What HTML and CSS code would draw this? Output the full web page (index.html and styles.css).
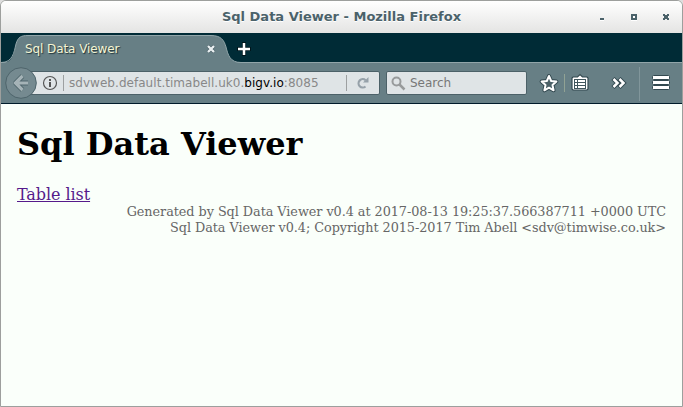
FILE: index.html
```html
<!DOCTYPE html>
<html lang="en">
<head>
<meta charset="utf-8">
<title>Sql Data Viewer</title>
<link rel="stylesheet" href="styles.css">
</head>
<body>
<div class="window">
  <header class="titlebar">
    <span class="window-title">Sql Data Viewer - Mozilla Firefox</span>
    <svg class="window-controls" width="80" height="32" shape-rendering="crispEdges">
      <g fill="#4b626a"><path d="M9 17h4v2H9zM40 13h6v6h-6zM72 13h2v1h2v-1h2v2h-1v2h1v2h-2v-1h-2v1h-2v-2h1v-2h-1z"/></g>
      <path fill="#fff" d="M42 15h2v2h-2zM9 19h4v1H9zM40 19h6v1h-6z"/>
    </svg>
  </header>
  <div class="tabs">
    <div class="tab">
      <svg class="tab-shape" width="241" height="31">
        <path d="M0 30C13 30 13 19 15 11C17 4 20 2.500 27 2.500H210C220 2.500 223 7 225 14C227 22 229 29.500 240 29.500V31H0Z" fill="#677f85"/>
        <path d="M0 29.500C12 29.500 13 19 15 11C17 4 20 2.500 27 2.500H210C220 2.500 223 7 225 14C227 22 229 29.500 240 29.500" fill="none" stroke="#91a5a9"/>
      </svg>
      <span class="tab-label">Sql Data Viewer</span>
      <svg class="tab-close" width="10" height="10"><path d="M2 2l6 6M8 2l-6 6" stroke="#4b6067" stroke-width="3.600"/><path d="M2 2l6 6M8 2l-6 6" stroke="#e9eff1" stroke-width="2.400"/></svg>
    </div>
    <svg class="new-tab" width="16" height="16"><path d="M8 1v14M1 8h14" stroke="#000" stroke-opacity=".5" stroke-width="4"/><path d="M8 2v12M2 8h12" stroke="#fff" stroke-width="2.500"/></svg>
  </div>
  <nav class="toolbar">
    <svg class="back" width="32" height="32"><circle cx="16" cy="16" r="15.300" fill="#758a90" stroke="#4e646b"/><path d="M17.500 9L10.500 16l7 7M11.500 16H23" fill="none" stroke="#4f656c" stroke-width="5" stroke-linejoin="round"/><path d="M17.500 9L10.500 16l7 7M11.500 16H23" fill="none" stroke="#a5b3b7" stroke-width="3.200"/></svg>
    <div class="address">
      <svg class="info" width="16" height="16"><circle cx="8" cy="8" r="6.500" fill="none" stroke="#555" stroke-width="1.200"/><path d="M7 4h2v2H7zM7 7h2v5H7z" fill="#555"/></svg>
      <span class="divider"></span>
      <span class="url">sdvweb.default.timabell.uk0.<b>bigv.io</b>:8085</span>
      <span class="divider reload-divider"></span>
      <svg class="reload" width="12" height="12"><path d="M8.500 9.500A4.200 4.200 0 1 1 8.600 3.200" fill="none" stroke="#96a1a9" stroke-width="2.200"/><path d="M11.500 0v5.500H6z" fill="#96a1a9"/></svg>
    </div>
    <div class="search">
      <svg width="15" height="15"><circle cx="5.500" cy="5.500" r="4" fill="none" stroke="#989b9c" stroke-width="2"/><path d="M8.500 8.500L13.500 13.500" stroke="#989b9c" stroke-width="2.500"/></svg>
      <span>Search</span>
    </div>
    <svg class="actions" width="154" height="39">
      <path d="M21 12l2.200 5 5.200.6-3.900 3.500 1.100 5.200L21 23.700l-4.600 2.600 1.100-5.200-3.900-3.500 5.200-.6z" fill="none" stroke="#334950" stroke-width="4" stroke-linejoin="round"/>
      <path d="M21 12l2.200 5 5.200.6-3.900 3.500 1.100 5.200L21 23.700l-4.600 2.600 1.100-5.200-3.900-3.500 5.200-.6z" fill="#4b6067" stroke="#fff" stroke-width="2" stroke-linejoin="round"/>
      <path d="M36.500 10v18" stroke="#91a294"/>
      <path d="M45 13h4.500l2.500-2.500 2.500 2.500H59l1 1v11l-1 1H45l-1-1V14z" fill="#fff" stroke="#334950" stroke-width="1.200"/>
      <path d="M46 15h12v10H46z" fill="#40565d"/>
      <path d="M47 16h2v2h-2zM50 16h7v2h-7zM47 19h2v2h-2zM50 19h7v2h-7zM47 22h2v2h-2zM50 22h7v2h-7z" fill="#fff"/>
      <path d="M85 14.500l4.500 4.500-4.500 4.500M91 14.500l4.500 4.500-4.500 4.500" fill="none" stroke="#334950" stroke-width="4.500"/>
      <path d="M85.500 15l4 4-4 4M91.500 15l4 4-4 4" fill="none" stroke="#fff" stroke-width="2.500"/>
      <path d="M111.500 3v34" stroke="#81969b"/>
      <g fill="#fff" stroke="#334950"><rect x="124.500" y="11.500" width="17" height="4" rx="1"/><rect x="124.500" y="16.500" width="17" height="4" rx="1"/><rect x="124.500" y="21.500" width="17" height="4" rx="1"/></g>
    </svg>
  </nav>
  <main class="page">
    <h1>Sql Data Viewer</h1>
    <a href="#">Table list</a>
    <footer>Generated by Sql Data Viewer v0.4 at 2017-08-13 19:25:37.566387711 +0000 UTC<br>Sql Data Viewer v0.4; Copyright 2015-2017 Tim Abell &lt;sdv@timwise.co.uk&gt;</footer>
  </main>
</div>
</body>
</html>
```
FILE: styles.css
```css
* { box-sizing: border-box; }
body { margin: 0; background: #dedede; overflow: hidden; }
svg { display: block; flex: none; }
.window { height: 407px; border: 1px solid #9d9f9d; border-radius: 6px 6px 0 0; overflow: hidden; background: #fafffa; display: flex; flex-direction: column; }
.titlebar { height: 32px; display: grid; grid-template-columns: 1fr auto; position: relative; background: linear-gradient(#fff, #e4e4e3); }
.window-title { grid-area: 1 / 1 / 2 / 3; text-align: center; font: bold 13px/31px "DejaVu Sans", sans-serif; color: #4b626a; text-shadow: 0 1px #fff; }
.window-controls { grid-area: 1 / 2; margin-right: 11px; }
.tabs { height: 30px; display: flex; background: #002b36; border-bottom: 1px solid #91a5a9; }
.tab { width: 235px; height: 30px; display: flex; align-items: center; position: relative; }
.tab-shape { position: absolute; left: 0; top: 0; }
.tab-label { position: relative; margin-left: 24px; width: 180px; padding-top: 2px; font: 12px/28px "DejaVu Sans", sans-serif; letter-spacing: -0.08px; color: #f5f5d4; text-shadow: 1px 1px 1px #21363c; white-space: nowrap; }
.tab-close { position: relative; margin: 2px 0 0 1px; }
.new-tab { margin-top: 8px; position: relative; }
.toolbar { height: 41px; display: flex; align-items: center; background: #677f85; border-bottom: 1px solid #001b2a; flex: none; }
.back { margin-left: 4px; position: relative; z-index: 1; }
.address, .search { height: 24px; display: flex; align-items: center; background: #dfe4e6; border: 1px solid #4c6168; border-radius: 2px; font: 12px/22px "DejaVu Sans", sans-serif; }
.address { width: 353px; margin-left: -10px; padding-left: 14px; color: #888; white-space: nowrap; }
.divider { width: 1px; height: 16px; margin-left: 5px; background: #9da0a1; }
.url { width: 278px; margin-left: 5px; letter-spacing: 0.04px; }
.url b { font-weight: normal; color: #000; }
.reload-divider { margin-left: -1px; }
.reload { margin-left: 10px; }
.search { width: 141px; margin-left: 6px; padding-left: 4px; color: #777; }
.search span { margin-left: 4px; }
.actions { margin-left: 1px; }
.page { flex: 1; padding: 0 16px; font: 16px/19px "DejaVu Serif", serif; color: #000; }
h1 { margin: 21px 0 22px; font-size: 32px; line-height: 38px; }
.page a { display: table; letter-spacing: -0.07px; color: #551a8b; }
footer { text-align: right; font-size: 12.8px; letter-spacing: -0.045px; line-height: 16px; color: #666; }
```
